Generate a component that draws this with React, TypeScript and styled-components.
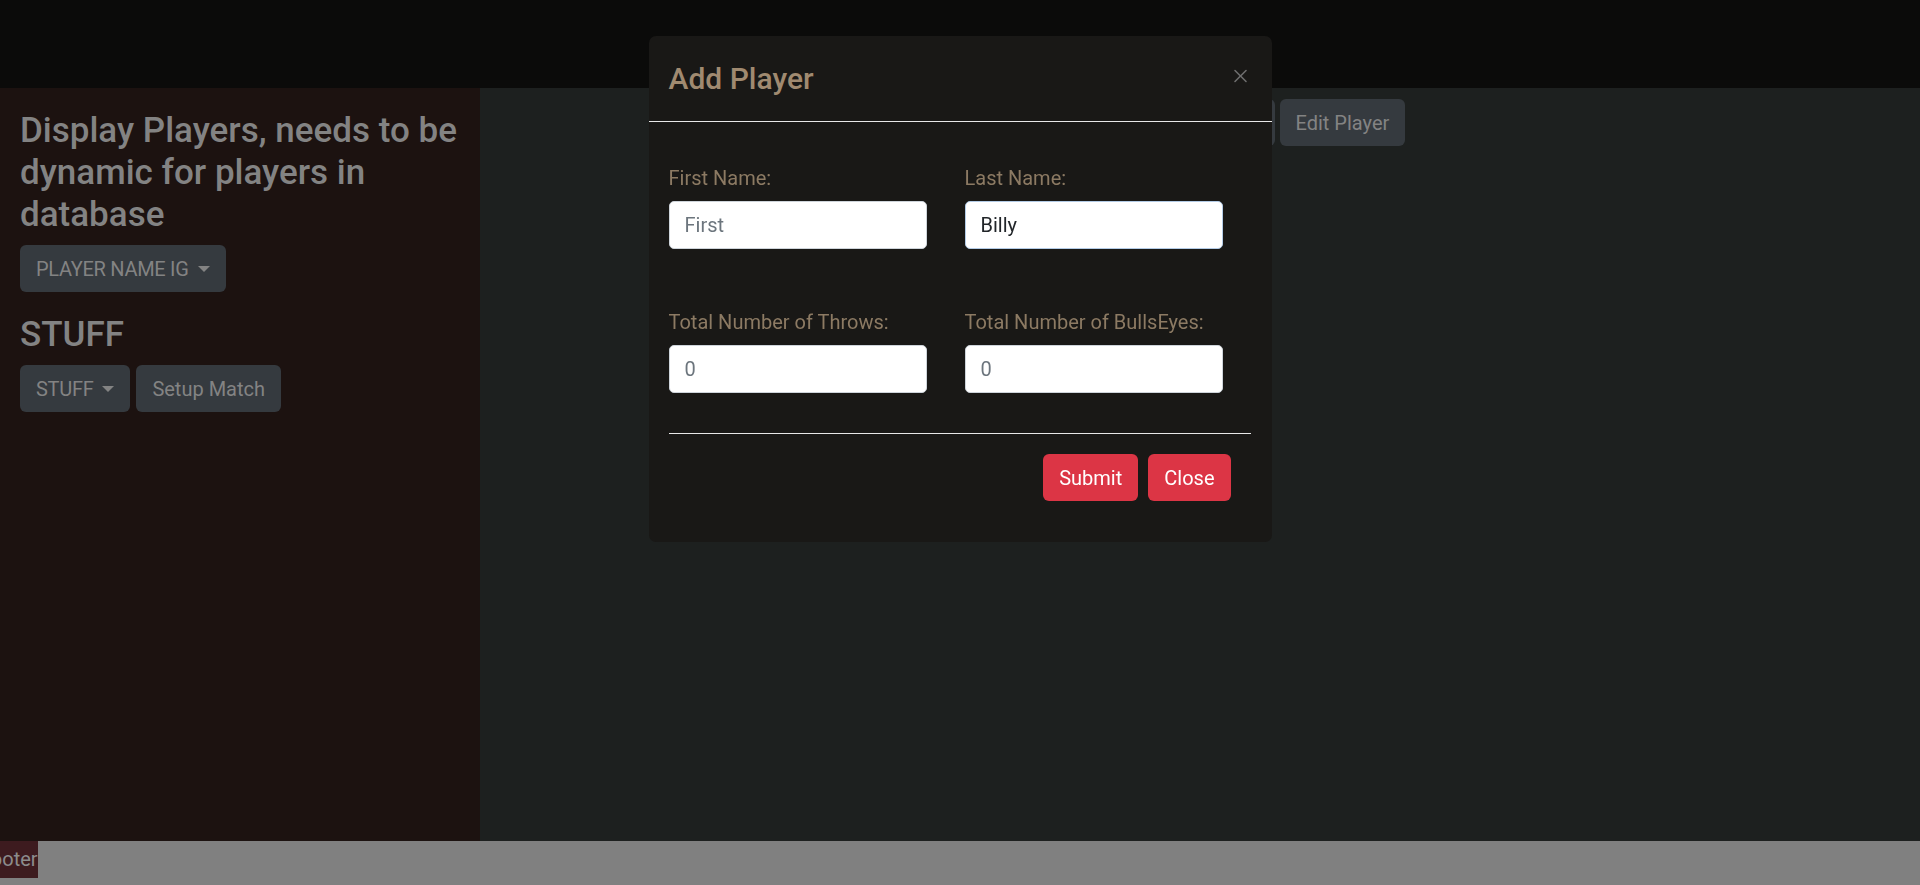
import React from 'react';
import styled, { createGlobalStyle } from 'styled-components';

const Global = createGlobalStyle`
  html, body {
    margin: 0;
    padding: 0;
    height: 100%;
    overflow: hidden;
    background: #808080;
  }
  body {
    font-family: Roboto, "Liberation Sans", Arial, sans-serif;
  }
  #root { height: 100%; }
  * { box-sizing: border-box; }
`;

const Page = styled.div`
  display: flex;
  flex-direction: column;
  height: 885px;
`;

const TopBar = styled.header`
  height: 88px;
  flex-shrink: 0;
  background: #0b0b0a;
`;

const Content = styled.div`
  flex: 1;
  display: flex;
  min-height: 0;
`;

const Sidebar = styled.aside`
  width: 480px;
  flex-shrink: 0;
  background: #1c1210;
  padding: 22px 20px 20px 20px;
`;

const Section = styled.section`
  margin-bottom: 22px;
`;

const Heading = styled.h3`
  margin: 0 0 9px;
  font-size: 35px;
  line-height: 42px;
  font-weight: 500;
  color: #838383;
  white-space: nowrap;
`;

const ButtonRow = styled.div`
  display: flex;
  gap: 6px;
`;

const Btn = styled.button<{ $variant?: 'secondary' | 'danger'; $caret?: boolean }>`
  font-family: inherit;
  font-size: 20px;
  line-height: 30px;
  padding: 7.5px 15px;
  border: 1px solid transparent;
  border-radius: 6px;
  cursor: pointer;
  white-space: nowrap;
  display: inline-flex;
  align-items: center;
  background: ${p => (p.$variant === 'danger' ? '#dc3545' : '#353a3f')};
  color: ${p => (p.$variant === 'danger' ? '#ffffff' : '#838383')};

  ${p =>
    p.$caret &&
    `
    letter-spacing: -0.3px;
    &::after {
      content: '';
      display: inline-block;
      margin-left: 9px;
      border-top: 6px solid #838383;
      border-left: 6px solid transparent;
      border-right: 6px solid transparent;
      border-bottom: 0;
    }
  `}
`;

const Main = styled.main`
  flex: 1;
  background: #1d201f;
  padding: 11px 0 0 667px;
`;

const MainActions = styled.div`
  display: flex;
  gap: 5px;
`;

const Footer = styled.footer`
  height: 44px;
  flex-shrink: 0;
  background: #808080;
  overflow: hidden;
`;

const FooterLabel = styled.span`
  display: inline-block;
  margin-left: -20px;
  height: 37px;
  line-height: 37px;
  font-size: 20px;
  color: #8c8c8c;
  background: #3d1b1f;
`;

const Overlay = styled.div`
  position: fixed;
  inset: 0;
  display: flex;
  justify-content: center;
  align-items: flex-start;
  padding-top: 36px;
`;

const Dialog = styled.div`
  width: 623px;
  background: #191816;
  border-radius: 7px;
  display: flex;
  flex-direction: column;
`;

const DialogHeader = styled.div`
  display: flex;
  justify-content: space-between;
  align-items: flex-start;
  padding: 20px;
  border-bottom: 1px solid #e8e8e8;
`;

const DialogTitle = styled.h4`
  margin: 0;
  font-size: 30px;
  line-height: 45px;
  font-weight: 500;
  color: #a08a70;
`;

const CloseIcon = styled.svg`
  width: 15px;
  height: 14px;
  margin-top: 13px;
  margin-right: 4px;
`;

const DialogBody = styled.div`
  padding: 41px 20px 0 20px;
`;

const FieldGrid = styled.div`
  display: grid;
  grid-template-columns: 258px 258px;
  column-gap: 38px;
  row-gap: 58px;
`;

const Field = styled.div`
  display: flex;
  flex-direction: column;
`;

const Label = styled.label`
  font-size: 20px;
  line-height: 30px;
  color: #8c7a63;
  margin-bottom: 8px;
`;

const Input = styled.input<{ $focused?: boolean }>`
  width: 258px;
  height: 48px;
  padding: 0 15px;
  font-family: inherit;
  font-size: 20px;
  color: #212529;
  caret-color: #212529;
  background: #ffffff;
  border: 1px solid ${p => (p.$focused ? '#b3cbe6' : '#ced4da')};
  border-radius: 5px;
  outline: none;

  &::placeholder {
    color: #6c757d;
    opacity: 1;
  }
`;

const Divider = styled.hr`
  margin: 40px 0 0;
  border: 0;
  border-top: 1px solid #e8e8e8;
  width: 582px;
`;

const DialogFooter = styled.div`
  display: flex;
  justify-content: flex-end;
  gap: 10px;
  padding: 20px 41px 41px 20px;
`;

export default function App() {
  return (
    <>
      <Global />
      <Page>
        <TopBar />
        <Content>
          <Sidebar>
            <Section>
              <Heading>
                Display Players, needs to be
                <br />
                dynamic for players in
                <br />
                database
              </Heading>
              <Btn $caret>PLAYER NAME IG</Btn>
            </Section>
            <Section>
              <Heading>STUFF</Heading>
              <ButtonRow>
                <Btn $caret>STUFF</Btn>
                <Btn>Setup Match</Btn>
              </ButtonRow>
            </Section>
          </Sidebar>
          <Main>
            <MainActions>
              <Btn>Add Player</Btn>
              <Btn>Edit Player</Btn>
            </MainActions>
          </Main>
        </Content>
        <Footer>
          <FooterLabel>Footer</FooterLabel>
        </Footer>
      </Page>

      <Overlay>
        <Dialog>
          <DialogHeader>
            <DialogTitle>Add Player</DialogTitle>
            <CloseIcon viewBox="0 0 16 16" aria-label="Close">
              <path
                d="M.293.293a1 1 0 0 1 1.414 0L8 6.586 14.293.293a1 1 0 1 1 1.414 1.414L9.414 8l6.293 6.293a1 1 0 0 1-1.414 1.414L8 9.414l-6.293 6.293a1 1 0 0 1-1.414-1.414L6.586 8 .293 1.707a1 1 0 0 1 0-1.414z"
                fill="#6e6e6e"
                transform="scale(0.9) translate(0.9 0.9)"
              />
            </CloseIcon>
          </DialogHeader>
          <DialogBody>
            <FieldGrid>
              <Field>
                <Label>First Name:</Label>
                <Input placeholder="First" />
              </Field>
              <Field>
                <Label>Last Name:</Label>
                <Input $focused defaultValue="Billy" autoFocus />
              </Field>
              <Field>
                <Label>Total Number of Throws:</Label>
                <Input placeholder="0" />
              </Field>
              <Field>
                <Label>Total Number of BullsEyes:</Label>
                <Input placeholder="0" />
              </Field>
            </FieldGrid>
            <Divider />
          </DialogBody>
          <DialogFooter>
            <Btn $variant="danger">Submit</Btn>
            <Btn $variant="danger">Close</Btn>
          </DialogFooter>
        </Dialog>
      </Overlay>
    </>
  );
}
